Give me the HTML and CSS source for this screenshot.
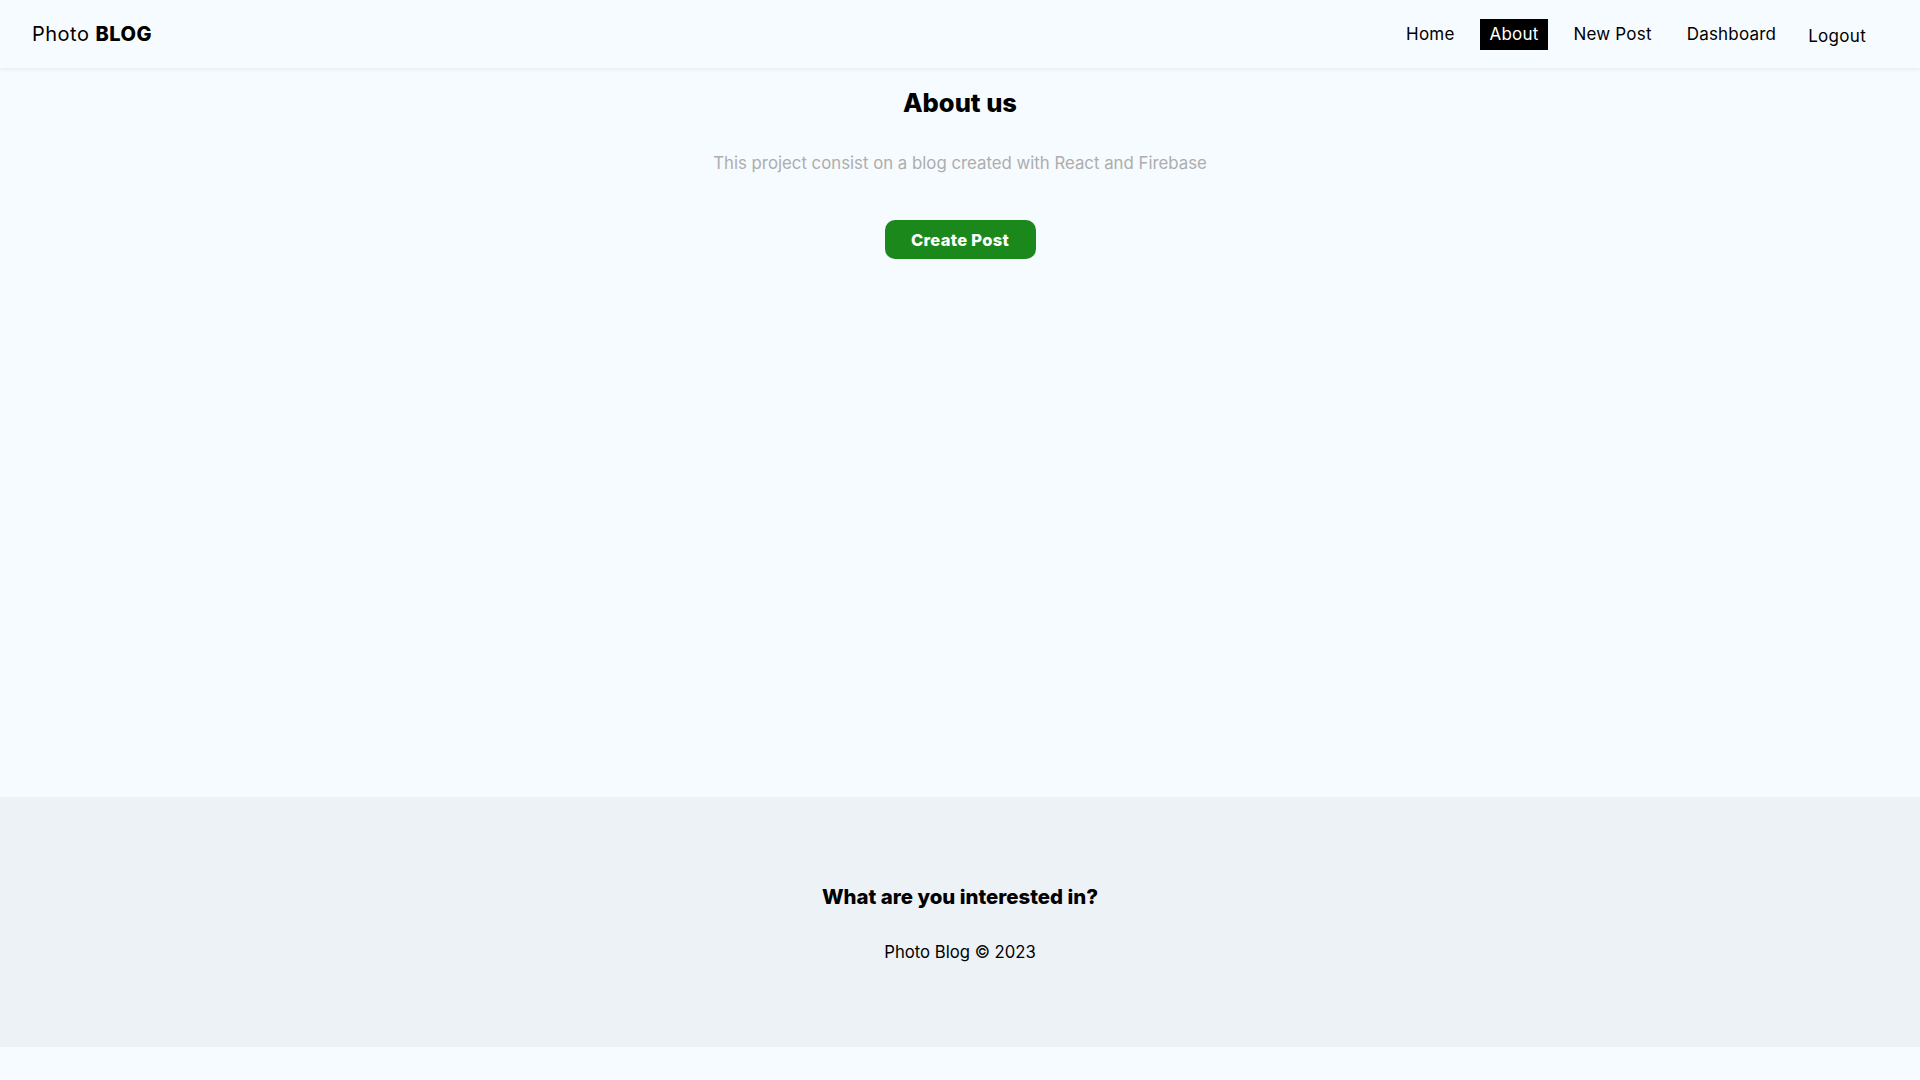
FILE: index.html
```html
<!DOCTYPE html>
<html lang="en">
<head>
<meta charset="utf-8">
<title>Photo Blog</title>
<link rel="stylesheet" href="styles.css">
</head>
<body>
<nav class="navbar">
  <a class="brand" href="#">Photo <span>BLOG</span></a>
  <ul class="nav-links">
    <li><a href="#">Home</a></li>
    <li><a class="active" href="#">About</a></li>
    <li><a href="#">New Post</a></li>
    <li><a href="#">Dashboard</a></li>
    <li><button class="logout">Logout</button></li>
  </ul>
</nav>
<main class="about">
  <h2>About us</h2>
  <p>This project consist on a blog created with React and Firebase</p>
  <a class="btn" href="#">Create Post</a>
</main>
<footer class="footer">
  <h3>What are you interested in?</h3>
  <p>Photo Blog &copy; 2023</p>
</footer>
</body>
</html>
```
FILE: styles.css
```css
* { box-sizing: border-box; }
html, body { margin: 0; padding: 0; }
body {
  background: #f6fbff;
  font-family: Inter, "Open Sans", sans-serif;
  color: #000;
}
a { text-decoration: none; color: inherit; }

.navbar {
  display: flex;
  align-items: center;
  justify-content: space-between;
  height: 68px;
  padding: 0 54px 0 32px;
  background: #f6fbff;
  box-shadow: 0 1px 4px rgba(0,0,0,0.08);
  position: relative;
}
.brand { font-size: 20px; letter-spacing: 0.5px; }
.brand span { font-weight: 800; }
.nav-links {
  list-style: none;
  display: flex;
  align-items: center;
  gap: 15px;
  margin: 0;
  padding: 0;
}
.nav-links a {
  display: block;
  font-size: 17px;
  padding: 4px 10px;
  line-height: 23px;
  letter-spacing: 0.2px;
}
.nav-links a.active { background: #000; color: #fff; }
.logout {
  background: none;
  border: none;
  font-family: inherit;
  font-size: 17px;
  letter-spacing: 0.3px;
  padding: 4px 0 0 0;
  margin-left: 7px;
  cursor: pointer;
}

.about {
  height: 729px;
  display: flex;
  flex-direction: column;
  align-items: center;
  padding-top: 20px;
}
.about h2 {
  margin: 0;
  font-size: 25.5px;
  line-height: 30px;
  font-weight: 800;
}
.about p {
  margin: 33px 0 0;
  font-size: 16.8px;
  line-height: 24px;
  color: #adadad;
}
.btn {
  margin-top: 45px;
  width: 151px;
  height: 39px;
  display: flex;
  align-items: center;
  justify-content: center;
  background: #1b881b;
  color: #fff;
  font-weight: 800;
  font-size: 16.5px;
  letter-spacing: 0.3px;
  border-radius: 10px;
}

.footer {
  background: #edf2f6;
  height: 250px;
  display: flex;
  flex-direction: column;
  align-items: center;
  padding-top: 88px;
}
.footer h3 {
  margin: 0;
  font-size: 20.4px;
  line-height: 24px;
  font-weight: 800;
}
.footer p {
  margin: 31px 0 0;
  font-size: 16.7px;
  line-height: 24px;
}
```
